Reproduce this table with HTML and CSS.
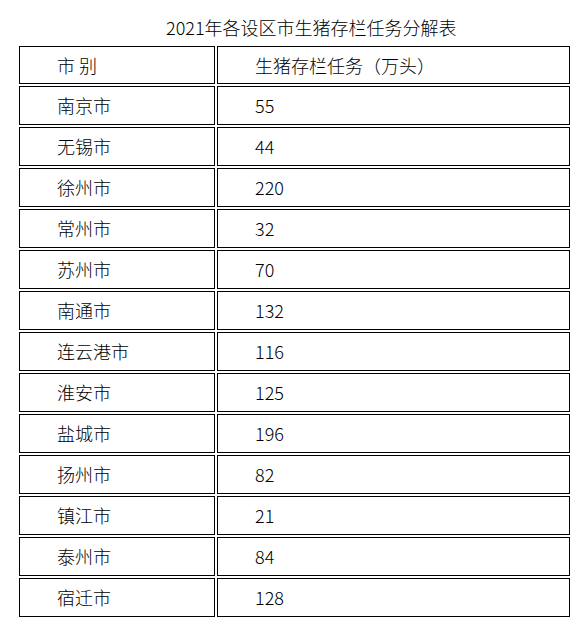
FILE: index.html
```html
<!DOCTYPE html>
<html lang="zh-CN">
<head>
<meta charset="utf-8">
<title>2021年各设区市生猪存栏任务分解表</title>
<link rel="stylesheet" href="styles.css">
</head>
<body>
<div class="page">
  <div class="title">2021年各设区市生猪存栏任务分解表</div>
  <table class="tbl">
    <colgroup><col class="c1"><col class="c2"></colgroup>
    <thead>
      <tr class="head"><td>市 别</td><td>生猪存栏任务（万头）</td></tr>
    </thead>
    <tbody>
      <tr><td>南京市</td><td>55</td></tr>
      <tr><td>无锡市</td><td>44</td></tr>
      <tr><td>徐州市</td><td>220</td></tr>
      <tr><td>常州市</td><td>32</td></tr>
      <tr><td>苏州市</td><td>70</td></tr>
      <tr><td>南通市</td><td>132</td></tr>
      <tr><td>连云港市</td><td>116</td></tr>
      <tr><td>淮安市</td><td>125</td></tr>
      <tr><td>盐城市</td><td>196</td></tr>
      <tr><td>扬州市</td><td>82</td></tr>
      <tr><td>镇江市</td><td>21</td></tr>
      <tr><td>泰州市</td><td>84</td></tr>
      <tr><td>宿迁市</td><td>128</td></tr>
    </tbody>
  </table>
</div>
</body>
</html>
```

FILE: styles.css
```css
html, body {
  margin: 0;
  padding: 0;
  background: #fff;
}
body {
  font-family: "Noto Sans CJK SC", "Microsoft YaHei", sans-serif;
  font-size: 18px;
  font-weight: 300;
  color: #000;
}
.page {
  padding-top: 15px;
}
.title {
  line-height: 24px;
  height: 24px;
  padding-left: 166px;
  margin-bottom: 5px;
  white-space: nowrap;
}
.tbl {
  border-collapse: separate;
  border-spacing: 2px;
  margin-left: 17px;
  width: 555px;
  table-layout: fixed;
}
.c1 { width: 196px; }
.c2 { width: 353px; }
.tbl td {
  box-sizing: border-box;
  border: 1px solid #000;
  padding: 0 0 0 37px;
  line-height: 37px;
  white-space: nowrap;
}
.tbl .head td {
  line-height: 36px;
}
```
